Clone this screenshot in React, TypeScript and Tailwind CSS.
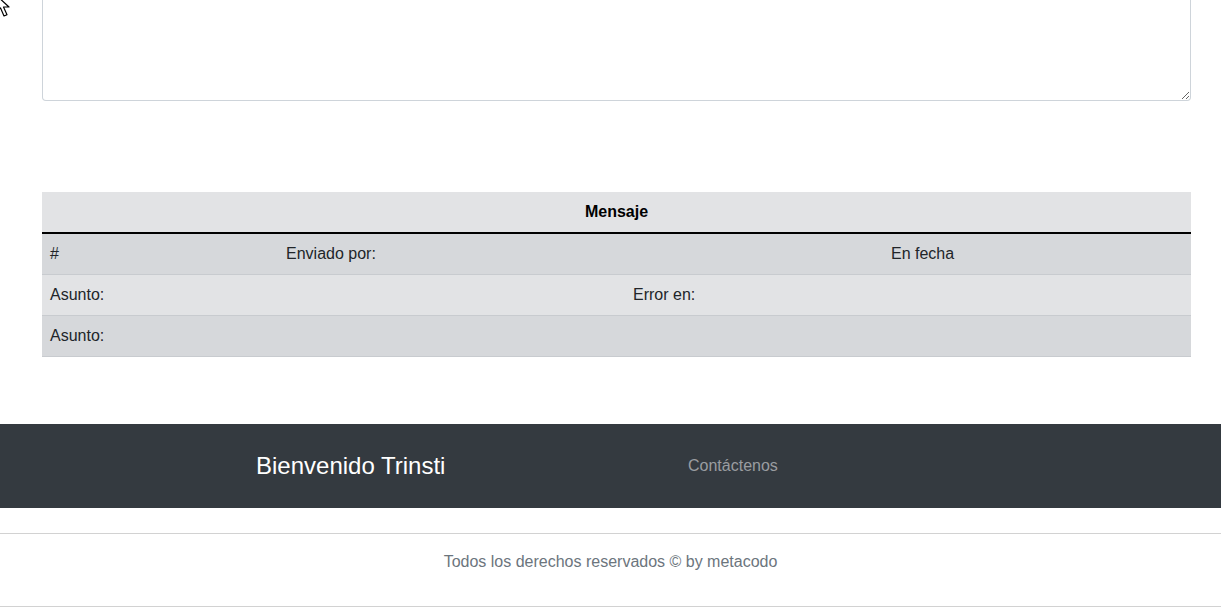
import React from "react";

function Fila({ dark, children }: { dark?: boolean; children: React.ReactNode }) {
  return (
    <div className={`h-[41px] flex items-center border-b border-[#c8cbcf] ${dark ? "bg-[#d6d8db]" : "bg-[#e2e3e5]"}`}>
      {children}
    </div>
  );
}

function App() {
  return (
    <div className="relative w-full bg-white text-[#212529]" style={{ fontFamily: '"Liberation Sans", Arial, sans-serif' }}>
      {/* puntero del raton */}
      <svg className="absolute left-[-5px] top-[-6px]" width="20" height="26" viewBox="0 0 20 26">
        <path d="M1 1 L1 18 L5.5 14 L9 22 L12 20.7 L8.5 13 L14 13 Z" fill="white" stroke="black" strokeWidth="1.2" strokeLinejoin="round" />
      </svg>

      <div className="pl-[42px] pr-[30px]">
        <textarea
          className="block w-full h-[101px] border border-t-0 border-[#ced4da] rounded-b-[4px] bg-white"
          readOnly
        />
      </div>

      <section className="mt-[91px] pl-[42px] pr-[30px]">
        <div className="h-[40px] flex items-center justify-center bg-[#e2e3e5] text-[16px] font-bold text-black">
          Mensaje
        </div>
        <div className="h-[2px] bg-black"></div>
        <Fila dark>
          <div className="w-[236px] pl-[8px]">#</div>
          <div className="w-[605px] pl-[8px]">Enviado por:</div>
          <div className="pl-[8px]">En fecha</div>
        </Fila>
        <Fila>
          <div className="w-[583px] pl-[8px]">Asunto:</div>
          <div className="pl-[8px]">Error en:</div>
        </Fila>
        <Fila dark>
          <div className="pl-[8px]">Asunto:</div>
        </Fila>
      </section>

      <footer className="mt-[67px]">
        <nav className="h-[84px] bg-[#343a40] flex items-center">
          <span className="ml-[256px] w-[432px] text-[24px] text-white">Bienvenido Trinsti</span>
          <span className="text-[16px] text-[#9a9da0]">Contáctenos</span>
        </nav>
        <div className="mt-[25px] border-t border-[#d2d2d2]"></div>
        <p className="h-[72px] pt-[16px] leading-[24px] text-center text-[16px] text-[#6c757d]">
          Todos los derechos reservados © by metacodo
        </p>
        <div className="border-t border-[#d2d2d2]"></div>
      </footer>
    </div>
  );
}

export default App;
